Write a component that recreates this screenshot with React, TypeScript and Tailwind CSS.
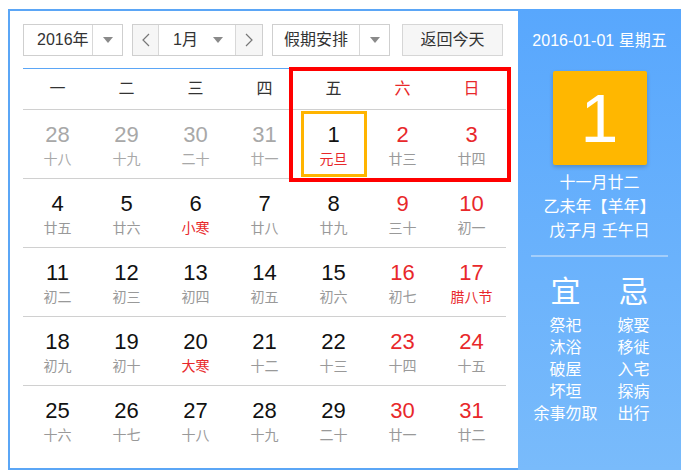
import React from 'react';

type Day = { n: number; lunar: string; other?: boolean; holiday?: boolean };

const WEEK = ['一', '二', '三', '四', '五', '六', '日'];

const DAYS: Day[] = [
  { n: 28, lunar: '十八', other: true },
  { n: 29, lunar: '十九', other: true },
  { n: 30, lunar: '二十', other: true },
  { n: 31, lunar: '廿一', other: true },
  { n: 1, lunar: '元旦', holiday: true },
  { n: 2, lunar: '廿三' },
  { n: 3, lunar: '廿四' },
  { n: 4, lunar: '廿五' },
  { n: 5, lunar: '廿六' },
  { n: 6, lunar: '小寒', holiday: true },
  { n: 7, lunar: '廿八' },
  { n: 8, lunar: '廿九' },
  { n: 9, lunar: '三十' },
  { n: 10, lunar: '初一' },
  { n: 11, lunar: '初二' },
  { n: 12, lunar: '初三' },
  { n: 13, lunar: '初四' },
  { n: 14, lunar: '初五' },
  { n: 15, lunar: '初六' },
  { n: 16, lunar: '初七' },
  { n: 17, lunar: '腊八节', holiday: true },
  { n: 18, lunar: '初九' },
  { n: 19, lunar: '初十' },
  { n: 20, lunar: '大寒', holiday: true },
  { n: 21, lunar: '十二' },
  { n: 22, lunar: '十三' },
  { n: 23, lunar: '十四' },
  { n: 24, lunar: '十五' },
  { n: 25, lunar: '十六' },
  { n: 26, lunar: '十七' },
  { n: 27, lunar: '十八' },
  { n: 28, lunar: '十九' },
  { n: 29, lunar: '二十' },
  { n: 30, lunar: '廿一' },
  { n: 31, lunar: '廿二' },
];

const YI = ['祭祀', '沐浴', '破屋', '坏垣', '余事勿取'];
const JI = ['嫁娶', '移徙', '入宅', '探病', '出行'];

function Caret() {
  return (
    <svg width="10" height="6" viewBox="0 0 10 6">
      <path d="M0 0 L10 0 L5 6 Z" fill="#8a8a8a" />
    </svg>
  );
}

function Chevron({ dir }: { dir: 'l' | 'r' }) {
  return (
    <svg width="8" height="14" viewBox="0 0 8 14">
      <polyline
        points={dir === 'l' ? '7,1 1,7 7,13' : '1,1 7,7 1,13'}
        fill="none"
        stroke="#777"
        strokeWidth="1.2"
      />
    </svg>
  );
}

export default function App() {
  const rows = [0, 1, 2, 3, 4].map(r => DAYS.slice(r * 7, r * 7 + 7));

  return (
    <div
      className="w-[686px] h-[475px] bg-white pl-[8px] pt-[9px] text-[#333]"
      style={{ fontFamily: '"Liberation Sans", "Noto Sans CJK SC", sans-serif' }}
    >
      <div className="flex w-[673px] h-[461px]">
        {/* left: calendar */}
        <div className="w-[510px] h-full border-l-2 border-t-2 border-b-2 border-[#5ba6f6] pl-[13px] pt-[13px]">
          {/* toolbar */}
          <div className="flex items-center h-[32px] text-[16px]">
            <div className="flex h-[32px] w-[100px] border border-[#cfcfcf] bg-white">
              <div className="w-[68px] flex items-center pl-[13px] leading-[30px]">2016年</div>
              <div className="flex-1 flex items-center justify-center border-l border-[#d8d8d8]">
                <Caret />
              </div>
            </div>

            <div className="flex h-[32px] w-[131px] ml-[9px] border border-[#cfcfcf] bg-white">
              <div className="w-[26px] flex items-center justify-center bg-[#f6f6f6] border-r border-[#d8d8d8]">
                <Chevron dir="l" />
              </div>
              <div className="w-[76px] flex items-center pl-[14px] leading-[30px]">
                <span>1月</span>
                <span className="ml-auto mr-[12px] flex items-center">
                  <Caret />
                </span>
              </div>
              <div className="flex-1 flex items-center justify-center bg-[#f6f6f6] border-l border-[#d8d8d8]">
                <Chevron dir="r" />
              </div>
            </div>

            <div className="flex h-[32px] w-[118px] ml-[9px] border border-[#cfcfcf] bg-white">
              <div className="w-[86px] flex items-center justify-center leading-[30px]">假期安排</div>
              <div className="flex-1 flex items-center justify-center border-l border-[#d8d8d8]">
                <Caret />
              </div>
            </div>

            <button className="h-[32px] w-[101px] ml-[12px] border border-[#d6d6d6] bg-[#f6f6f6] text-[#333] leading-[30px]">
              返回今天
            </button>
          </div>

          {/* grid */}
          <div className="relative w-[483px] mt-[12px]">
            <div className="grid grid-cols-7 h-[42px] border-t border-[#5ba6f6] border-b border-b-[#d0d0d0] items-center text-[16px]">
              {WEEK.map((w, i) => (
                <div key={w} className={`text-center ${i >= 5 ? 'text-[#e8282b]' : 'text-[#333]'}`}>
                  {w}
                </div>
              ))}
            </div>

            {rows.map((row, ri) => (
              <div
                key={ri}
                className={`grid grid-cols-7 h-[69px] ${ri < 4 ? 'border-b border-[#d0d0d0]' : ''}`}
              >
                {row.map((d, ci) => {
                  const today = !d.other && d.n === 1;
                  const weekend = ci >= 5;
                  const numColor = d.other ? 'text-[#a8a8a8]' : weekend ? 'text-[#e8282b]' : 'text-[#111]';
                  const lunarColor = d.holiday ? 'text-[#e8282b]' : d.other ? 'text-[#a8a8a8]' : 'text-[#999]';
                  return (
                    <div key={ci} className="flex justify-center">
                      <div
                        className={`w-[66px] h-[66px] mt-[1px] border-[3px] flex flex-col items-center pt-[8px] ${
                          today ? 'border-[#ffb400]' : 'border-transparent'
                        }`}
                      >
                        <div className={`text-[22px] leading-[26px] ${numColor}`}>{d.n}</div>
                        <div className={`text-[14px] leading-[20px] mt-[1px] ${lunarColor}`}>{d.lunar}</div>
                      </div>
                    </div>
                  );
                })}
              </div>
            ))}

            {/* weekend highlight overlay */}
            <div className="absolute left-[266px] top-[-1px] w-[222px] h-[115px] border-4 border-[#ff0000] pointer-events-none" />
          </div>
        </div>

        {/* right: detail panel */}
        <div className="w-[163px] h-full bg-gradient-to-b from-[#58a7fd] to-[#79bbfb] text-white flex flex-col items-center">
          <div className="pt-[22px] text-[16px] leading-[20px]">2016-01-01 星期五</div>
          <div className="mt-[20px] w-[94px] h-[94px] bg-[#ffb700] rounded-[2px] shadow-[0_2px_4px_rgba(0,0,0,0.2)] flex items-center justify-center text-[68px] leading-none">
            1
          </div>
          <div className="mt-[6px] text-[16px] leading-[24px] text-center">
            <div>十一月廿二</div>
            <div>乙未年【羊年】</div>
            <div>戊子月 壬午日</div>
          </div>
          <div className="mt-[12px] w-[137px] h-[2px] bg-[#a3cefb]" />
          <div className="flex mt-[17px] w-[136px]">
            <div className="w-[68px] flex flex-col items-center">
              <div className="text-[30px] leading-[36px]">宜</div>
              <div className="mt-[5px] text-[16px] leading-[22px] text-center">
                {YI.map(t => (
                  <div key={t}>{t}</div>
                ))}
              </div>
            </div>
            <div className="w-[68px] flex flex-col items-center">
              <div className="text-[30px] leading-[36px]">忌</div>
              <div className="mt-[5px] text-[16px] leading-[22px] text-center">
                {JI.map(t => (
                  <div key={t}>{t}</div>
                ))}
              </div>
            </div>
          </div>
        </div>
      </div>
    </div>
  );
}
